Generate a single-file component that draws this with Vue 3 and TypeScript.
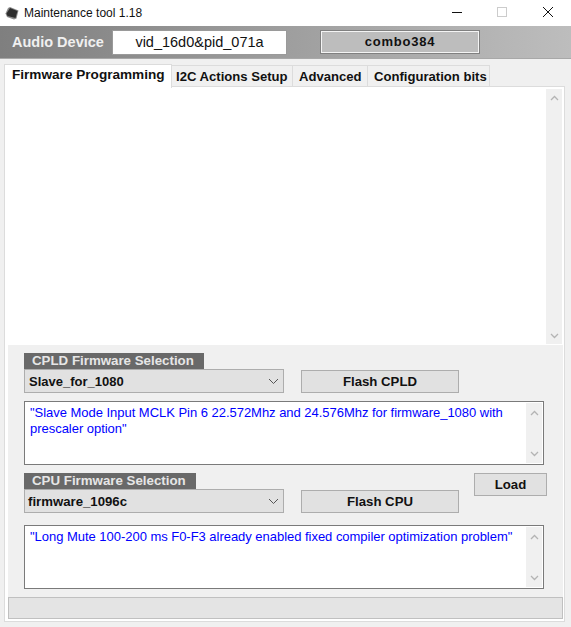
<script setup lang="ts">
interface Tab { label: string; cls: string }
const tabs: Tab[] = [
  { label: 'I2C Actions Setup', cls: 't0' },
  { label: 'Advanced', cls: 't1' },
  { label: 'Configuration bits', cls: 't2' },
]
</script>

<template>
  <div class="win">
    <div class="titlebar">
      <svg class="appicon" width="16" height="16" viewBox="0 0 16 16">
        <path d="M6 2 L14.5 5.5 L12.5 13.5 L10 14.5 L3 12 L1.5 8.5 L4 3 Z" fill="#8c8c8c" />
        <path d="M6 3 L13.5 6 L11.5 13 L3.5 11 L2.5 8.5 Z" fill="#2e2e2e" />
      </svg>
      <span class="title">Maintenance tool 1.18</span>
      <div class="controls">
        <svg class="ctl-min" width="12" height="12" viewBox="0 0 12 12"><path d="M1 6.5H11" stroke="#111" stroke-width="1" /></svg>
        <svg class="ctl-max" width="12" height="12" viewBox="0 0 12 12"><rect x="1.5" y="1.5" width="9" height="9" fill="none" stroke="#ccc" /></svg>
        <svg width="12" height="12" viewBox="0 0 12 12"><path d="M1 1L11 11M11 1L1 11" stroke="#111" stroke-width="1" /></svg>
      </div>
    </div>

    <div class="devicebar">
      <span class="devlabel">Audio Device</span>
      <div class="devvalue">vid_16d0&amp;pid_071a</div>
      <div class="combo384">combo384</div>
    </div>

    <div class="tabs">
      <div class="tab active">Firmware Programming</div>
      <div v-for="t in tabs" :key="t.label" class="tab" :class="t.cls">{{ t.label }}</div>
    </div>

    <div class="panel">
      <div class="log">
        <div class="scroll">
          <svg width="9" height="6" viewBox="0 0 9 6"><path d="M1 5L4.5 1.5L8 5" fill="none" stroke="#b4b4b4" stroke-width="1.3" /></svg>
          <svg width="9" height="6" viewBox="0 0 9 6"><path d="M1 1L4.5 4.5L8 1" fill="none" stroke="#b4b4b4" stroke-width="1.3" /></svg>
        </div>
      </div>

      <div class="lower">
        <div class="controlsgrid">
          <div class="grouplabel cpld">CPLD Firmware Selection</div>
          <div class="select r2">
            <span>Slave_for_1080</span>
            <svg width="11" height="7" viewBox="0 0 11 7"><path d="M1 1L5.5 5.5L10 1" fill="none" stroke="#555" stroke-width="1" /></svg>
          </div>
          <button class="btn flash r2" type="button">Flash CPLD</button>

          <div class="memo r3">
            <div class="memotext">"Slave Mode Input MCLK Pin 6 22.572Mhz and 24.576Mhz for firmware_1080 with prescaler option"</div>
            <div class="memoscroll">
              <svg width="9" height="6" viewBox="0 0 9 6"><path d="M1 5L4.5 1.5L8 5" fill="none" stroke="#b4b4b4" stroke-width="1.3" /></svg>
              <svg width="9" height="6" viewBox="0 0 9 6"><path d="M1 1L4.5 4.5L8 1" fill="none" stroke="#b4b4b4" stroke-width="1.3" /></svg>
            </div>
          </div>

          <div class="grouplabel cpu">CPU Firmware Selection</div>
          <button class="btn load" type="button">Load</button>
          <div class="select second r5">
            <span>firmware_1096c</span>
            <svg width="11" height="7" viewBox="0 0 11 7"><path d="M1 1L5.5 5.5L10 1" fill="none" stroke="#555" stroke-width="1" /></svg>
          </div>
          <button class="btn flash r5" type="button">Flash CPU</button>

          <div class="memo last">
            <div class="memotext">"Long Mute 100-200 ms F0-F3 already enabled fixed compiler optimization problem"</div>
            <div class="memoscroll">
              <svg width="9" height="6" viewBox="0 0 9 6"><path d="M1 5L4.5 1.5L8 5" fill="none" stroke="#b4b4b4" stroke-width="1.3" /></svg>
              <svg width="9" height="6" viewBox="0 0 9 6"><path d="M1 1L4.5 4.5L8 1" fill="none" stroke="#b4b4b4" stroke-width="1.3" /></svg>
            </div>
          </div>
        </div>

        <div class="status"></div>
      </div>
    </div>
  </div>
</template>

<style>
html, body { margin: 0; background: #f0f0f0; }
</style>

<style scoped>
.win {
  width: 571px;
  height: 627px;
  background: #f0f0f0;
  font-family: "Liberation Sans", Arial, sans-serif;
  overflow: hidden;
}
.titlebar {
  height: 26px;
  background: #fff;
  display: flex;
  align-items: center;
  box-sizing: border-box;
  padding-left: 4px;
}
.appicon { margin-right: 4px; flex: none; }
.title { font-size: 12px; color: #111; }
.controls {
  margin-left: auto;
  margin-bottom: 2px;
  display: flex;
  padding-right: 17px;
  align-items: center;
}
.ctl-min { margin-right: 33px; }
.ctl-max { margin-right: 34px; }
.devicebar {
  height: 33px;
  background: linear-gradient(90deg, #7f7f7f 0%, #bdbdbd 100%);
  border-bottom: 1px solid #a8a8a8;
  box-sizing: border-box;
  display: flex;
  align-items: center;
  padding-left: 12px;
}
.devlabel {
  width: 100px;
  color: #f0f0f0;
  font-weight: 700;
  font-size: 14.5px;
}
.devvalue {
  width: 175px;
  height: 25px;
  background: #fff;
  border: 1px solid #9a9a9a;
  box-sizing: border-box;
  text-align: center;
  line-height: 23px;
  font-size: 14.5px;
  color: #111;
}
.combo384 {
  margin-left: 33px;
  width: 160px;
  height: 24px;
  box-sizing: border-box;
  background: #bdbdbd;
  border: 1px solid #808080;
  box-shadow: inset 0 0 0 1px #f4f4f4;
  text-align: center;
  line-height: 22px;
  font-weight: 700;
  font-size: 13px;
  letter-spacing: 0.8px;
  color: #111;
}
.tabs {
  display: flex;
  align-items: flex-start;
  height: 28px;
  padding: 5px 0 0 4px;
  box-sizing: border-box;
  position: relative;
  z-index: 1;
}
.tab {
  height: 22px;
  margin-top: 1px;
  box-sizing: border-box;
  border: 1px solid #dcdcdc;
  border-left: none;
  background: #f0f0f0;
  font-size: 13.1px;
  font-weight: 700;
  line-height: 21px;
  color: #111;
  white-space: nowrap;
}
.t0 { width: 121px; padding-left: 4px; }
.t1 { width: 75px; padding-left: 6px; }
.t2 { width: 122px; padding-left: 6px; }
.tab.active {
  width: 168px;
  height: 24px;
  margin-top: 0;
  background: #fff;
  border: 1px solid #dcdcdc;
  border-bottom: none;
  padding-left: 7px;
  line-height: 19px;
  font-size: 13.6px;
}
.panel {
  margin-left: 4px;
  width: 561px;
  height: 536px;
  margin-top: -1px;
  border: 1px solid #dcdcdc;
  box-sizing: border-box;
  background: #fff;
  padding: 0 1px 2px 3px;
  display: flex;
  flex-direction: column;
}
.log {
  height: 258px;
  flex: none;
  display: flex;
  justify-content: flex-end;
  padding: 2px 0 1px;
  box-sizing: border-box;
}
.scroll {
  width: 16px;
  margin-right: 1px;
  background: #f0f0f0;
  display: flex;
  flex-direction: column;
  justify-content: space-between;
  align-items: center;
  padding: 6px 0 5px;
  box-sizing: border-box;
}
.lower {
  flex: 1;
  background: #f0f0f0;
  display: flex;
  flex-direction: column;
}
.controlsgrid {
  display: grid;
  grid-template-columns: 260px 17px 158px 15px 73px;
  margin-left: 16px;
  padding-top: 8px;
}
.grouplabel {
  background: #696969;
  color: #e6e6e6;
  font-weight: 700;
  font-size: 13.3px;
  height: 16px;
  line-height: 16px;
  padding-left: 8px;
  box-sizing: border-box;
  grid-column: 1 / 4;
}
.grouplabel.cpld { width: 180px; grid-row: 1; }
.grouplabel.cpu { width: 172px; grid-row: 4; margin-top: 8px; }
.select {
  grid-column: 1;
  height: 24px;
  background: #e1e1e1;
  border: 1px solid #adadad;
  box-sizing: border-box;
  display: flex;
  align-items: center;
  justify-content: space-between;
  padding: 0 4px 0 4px;
  font-weight: 700;
  font-size: 13px;
  color: #111;
}
.select.second { padding-left: 3px; font-size: 13.2px; }
.r2 { grid-row: 2; }
.r3 { grid-row: 3; }
.r5 { grid-row: 5; }
.btn {
  grid-column: 3;
  height: 23px;
  align-self: end;
  background: #e1e1e1;
  border: 1px solid #adadad;
  box-sizing: border-box;
  font-family: inherit;
  font-weight: 700;
  font-size: 13.2px;
  color: #111;
  padding: 0;
}
.load {
  grid-column: 5;
  grid-row: 4 / 6;
  align-self: start;
  margin-top: 8px;
  width: 73px;
}
.memo {
  grid-column: 1 / -1;
  width: 520px;
  height: 64px;
  margin-top: 8px;
  background: #fff;
  border: 1px solid #7a7a7a;
  box-sizing: border-box;
  display: flex;
}
.memo.last { grid-row: 6; margin-top: 12px; }
.memotext {
  flex: 1;
  padding: 3px 0 0 5px;
  color: #0000ff;
  font-size: 13px;
  line-height: 16px;
  letter-spacing: -0.03px;
}
.memoscroll {
  width: 16px;
  flex: none;
  margin: 1px 1px 1px 0;
  background: #f0f0f0;
  display: flex;
  flex-direction: column;
  justify-content: space-between;
  align-items: center;
  padding: 7px 0 6px;
  box-sizing: border-box;
}
.status {
  margin-top: 8px;
  height: 22px;
  background: #e4e4e4;
  border: 1px solid #c0c0c0;
  box-sizing: border-box;
}
</style>
